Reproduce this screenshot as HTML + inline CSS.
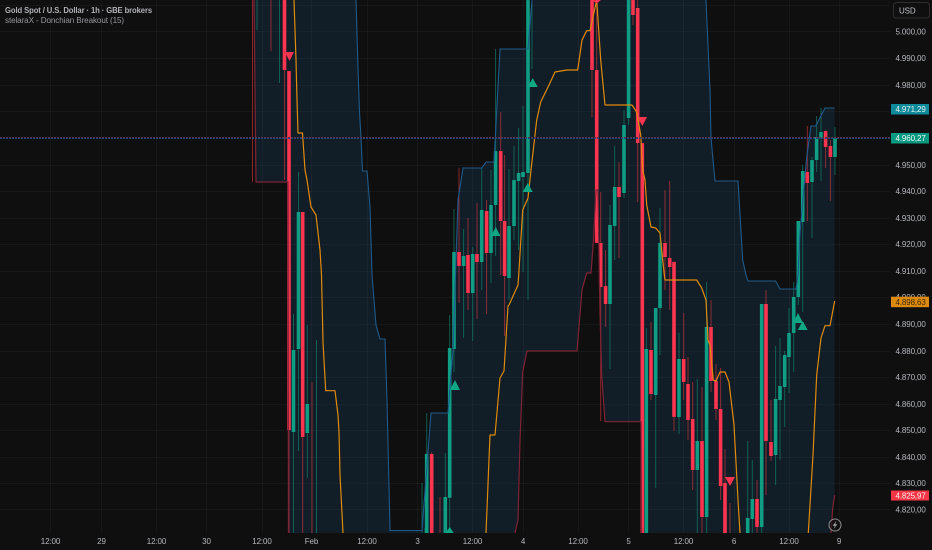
<!DOCTYPE html>
<html lang="en">
<head>
<meta charset="utf-8">
<title>Gold Spot / U.S. Dollar</title>
<style>
html,body{margin:0;padding:0;background:#0f0f0f;width:932px;height:550px;overflow:hidden}
svg{display:block;position:absolute;left:0;top:0;filter:blur(.3px)}
text{font-family:"Liberation Sans",sans-serif;letter-spacing:-.12px}
</style>
</head>
<body>
<svg width="932" height="550" viewBox="0 0 932 550" xmlns="http://www.w3.org/2000/svg">
<defs><clipPath id="c"><rect x="0" y="0" width="890" height="533"/></clipPath></defs>
<rect width="932" height="550" fill="#0f0f0f"/>
<g clip-path="url(#c)">
<polygon fill="#111d27" points="254,-5 356,-5 356,0 358,68 359.5,112 361,138 362.5,171 367,171 370,207 372,275 376,325 380,339 385,339 387,400 390,530.5 422,530.5 431,413 448,413 453,350 458,200 463,168 481.7,168 486,162 494,162 500,49 528,49 532,-5 705.5,-5 706,0 710,90 711,138 715,181 738,181 742.7,260 746,275 748,281 775.6,281 780,289 796,289 798,275 800,233 806.7,157 811,126 815.7,126 825,108 834.7,108 834.7,495 832.7,508 831,533 830,540 642,540 641,421.7 605,421.7 601.7,375 600,312 598,190 596,190 593.3,243 591,273 586.7,273 582,290 577,351 527,351 522.7,371.7 520,441 518,520 515,533 514,540 288,540 288,182 256,182 254,0"/>
<!-- grid -->
<g stroke="#fff" stroke-opacity=".035" stroke-width="1" fill="none">
<path d="M0 5.5H890M0 31.5H890M0 58.5H890M0 85.5H890M0 111.5H890M0 165.5H890M0 191.5H890M0 218.5H890M0 244.5H890M0 271.5H890M0 297.5H890M0 324.5H890M0 351.5H890M0 377.5H890M0 404.5H890M0 430.5H890M0 457.5H890M0 483.5H890M0 509.5H890"/>
<path d="M50.5 0V533M101.5 0V533M156.5 0V533M206.5 0V533M262.5 0V533M311.5 0V533M367.5 0V533M417.5 0V533M472.5 0V533M523.5 0V533M578.5 0V533M628.5 0V533M683.5 0V533M734.5 0V533M789.5 0V533M839.5 0V533"/>
</g>
<!-- wicks -->
<path fill="none" stroke="#0f8a75" stroke-opacity=".62" stroke-width="1" d="M257 0V30M279.5 0V83M293.5 314V533M298.5 172V451M307.3 325V478M316.5 340V533M422 483V533M425 528V533M426.7 413V533M445.3 453V533M449.7 315V533M454 209V372M463.6 229V338M472.7 247V341M481.7 168V290M491 170V283M495.6 49V256M509 169V300M514 146V240M518.6 128V250M523 106V272M528 0V300M532 0V69M610 205V369M614.7 146V260M624 110V198M628.6 0V125M646.3 328V533M655.7 308V488M660 208V355M679 333V434M697.3 379V533M706.6 282V533M747.7 441V533M752.3 460V533M761.7 304V533M775.6 346V485M780 338V460M784.7 351V427M789 308V393M793.7 282V372M798.3 221V305M802.7 165V312M812 157V238M816.6 116V172M821 108V181M835 127V175"/>
<path fill="none" stroke="#f23645" stroke-opacity=".55" stroke-width="1" d="M252.5 0V182M271 0V51M284.5 0V180M289 71V533M302.7 212V533M312 382V533M431.7 452V533M440 497V533M459 168V303M468 218V310M477 203V319M486.6 200V314M500.7 112V275M504.6 155V336M592 0V117M596.7 0V243M600.7 192V421M605.6 250V327M619 162V258M633 0V25M637.7 0V202M651 322V400M665 190V290M669.7 181V310M674 261V431M683.7 313V400M688 357V440M692.7 382V490M702 387V533M711 300V392M716 364V420M720.6 368V500M725 449V533M730 503V533M757 480V533M766 290V495M771 400V461M807.3 126V221M825.6 130V168M830.4 140V201"/>
<!-- bodies -->
<path fill="none" stroke="#0f9d84" stroke-width="3.6" d="M293.5 350V432M298.5 212V349M307.3 404V433M426.7 454V533M445.3 497V533M449.7 348V497.7M454 252V349M463.6 256V266M472.7 254V293M481.7 210V262M491 205V253M495.6 151V205M509 226V278M514 180V226M518.6 173V181M523 172V177M528 0V173M610 225V304M614.7 187V226M624 125V193M628.6 0V118M646.3 349V533M655.7 308V395M660 243V308M679 359V417M697.3 441V470M706.6 327V517M747.7 518V533M752.3 499V519M761.7 304V527M775.6 399V455M780 386V400M784.7 355V387M789 333V357M793.7 297V333M798.3 221V297M802.7 171V222M812 160V182M816.6 137V160M821 132V138M835 138V157"/>
<path fill="none" stroke="#fb3450" stroke-width="3.6" d="M284.5 0V70M289 71V430M302.7 212V437M431.7 454V533M459 252V266M468 255V293M477 254V262M486.6 211V253M500.7 151V221M504.6 221V276M592 0V70M596.7 70V243M600.7 243V287M605.6 286V304M619 187V197M633 0V15M637.7 8V143M642.3 143V533M651 350V394M665 243V257M669.7 258V267M674 262V417M683.7 359V382M688 384V420M692.7 419V470M702 441V517M711 327V381M716 381V409M720.6 409V486M725 483V533M757 499V527M766 304V441M771 442V456M807.3 172V183M825.6 131V147M830.4 146V157"/>
<!-- band lines -->
<path fill="none" stroke="#1f5a8a" stroke-width="1.1" d="M356 0L358 68L359.5 112L361 138L362.5 171L367 171L370 207L372 275L376 325L380 339L385 339L387 400L390 530.5L422 530.5L431 413L448 413L453 350L458 200L463 168L481.7 168L486 162L494 162L500 49L528 49L532 0M706 0L710 90L711 138L715 181L738 181L742.7 260L746 275L748 281L775.6 281L780 289L796 289L798 275L800 233L806.7 157L811 126L815.7 126L825 108L834.7 108"/>
<path fill="none" stroke="#7f2336" stroke-width="1.2" d="M254 0L256 182L288 182L288.5 540M515 533L518 520L520 441L522.7 371.7L527 351L577 351L582 290L586.7 273L591 273L593.3 243L596 190L598 190L600 312L601.7 375L605 421.7L641 421.7L641.5 540M831 533L832.7 508L834.7 495"/>
<path fill="none" stroke="#e08a0c" stroke-width="1.2" stroke-linejoin="round" d="M294 0L296 60L297 100L298 133L302.5 133L305 170L307 180L311 207L316 215L320 250L321.5 275L323 342L325.7 390.7L335 390.7L338 415L339 432L340 475L343 533M486 533L490 435L495 435L500 378L504 371L508 306L509 305L518 285L518.7 275L522.7 210L528 198L531 170L536.7 120L540.7 102L549 85L555 72L567 70L577.7 70L582 40L586.7 30.7L590 30.7L596.7 0L600.7 60L605 105L632 105L636.7 112L640.7 135L642.7 170L645 180L646.7 205L651 227L655.7 228L660 233L661.7 250L664.3 275L665 280L696.7 280L701.7 288L706 300L708 340L710 345L713.3 380L716 381L720 372L725 372L729 382L734 425L738 500L740 533M808.3 533L813 455L816.7 375L821 338L825 325.7L830 325.7L834.7 301"/>
<!-- markers -->
<g fill="#10a785">
<polygon points="449.7,527 445,534 454.4,534"/>
<polygon points="455,380 450,390 460,390"/>
<polygon points="495.7,227 491,236 500.4,236"/>
<polygon points="527.7,183 522.7,192 532.7,192"/>
<polygon points="532.7,78 527.7,87 537.7,87"/>
<polygon points="798,313 793,323 803,323"/>
<polygon points="802.7,321 797.7,330 807.7,330"/>
</g>
<g fill="#fb3450">
<polygon points="285,52 294,52 289.5,61"/>
<polygon points="592,0 601,0 596.7,3.5"/>
<polygon points="637.5,117 647,117 642.3,126"/>
<polygon points="725,477 735,477 730,486"/>
</g>
<!-- crosshair -->
<path d="M0 137.5H891" stroke="#5a3350" stroke-width="1" stroke-dasharray="2 1" fill="none"/>
<path d="M0 138.5H891" stroke="#23457a" stroke-width="1" stroke-dasharray="2 1" fill="none"/>
</g>

<!-- legend -->
<text x="5" y="13" font-size="8.6" font-weight="700" fill="#b0b1b5" textLength="147" lengthAdjust="spacingAndGlyphs">Gold Spot / U.S. Dollar · 1h · GBE brokers</text>
<text x="5" y="23" font-size="8.6" fill="#96979c" textLength="119" lengthAdjust="spacingAndGlyphs">stelaraX - Donchian Breakout (15)</text>

<!-- USD -->
<rect x="893.5" y="2.5" width="36" height="15.5" rx="3" fill="#0f0f0f" stroke="#2e2e2e"/>
<text x="899" y="13.5" font-size="8" fill="#c2c4ca">USD</text>

<!-- price scale -->
<g font-size="8" fill="#b6b8bd" text-anchor="end">
<text x="925.7" y="34.5">5.000,00</text>
<text x="925.7" y="61">4.990,00</text>
<text x="925.7" y="88">4.980,00</text>
<text x="925.7" y="168">4.950,00</text>
<text x="925.7" y="194">4.940,00</text>
<text x="925.7" y="221">4.930,00</text>
<text x="925.7" y="247">4.920,00</text>
<text x="925.7" y="274">4.910,00</text>
<text x="925.7" y="300">4.900,00</text>
<text x="925.7" y="327">4.890,00</text>
<text x="925.7" y="354">4.880,00</text>
<text x="925.7" y="380">4.870,00</text>
<text x="925.7" y="407">4.860,00</text>
<text x="925.7" y="433">4.850,00</text>
<text x="925.7" y="460">4.840,00</text>
<text x="925.7" y="486">4.830,00</text>
<text x="925.7" y="512.5">4.820,00</text>
</g>
<rect x="891" y="104" width="38" height="10.5" fill="#0f8a9a"/>
<text x="925.7" y="112.2" font-size="8" fill="#e4f2f0" text-anchor="end">4.971,29</text>
<rect x="891" y="133" width="38" height="10.5" fill="#089981"/>
<text x="925.7" y="141.2" font-size="8" fill="#eef8f6" text-anchor="end">4.960,27</text>
<rect x="891" y="296.7" width="38" height="10.5" fill="#dd8a0f"/>
<text x="925.7" y="305" font-size="8" fill="#3a2a08" text-anchor="end">4.898,63</text>
<rect x="891" y="490.5" width="38" height="10" fill="#f23645"/>
<text x="925.7" y="498.6" font-size="8" fill="#ffeef0" text-anchor="end">4.825,97</text>

<!-- time axis -->
<g font-size="8" fill="#b6b8bd" text-anchor="middle">
<text x="50.5" y="544">12:00</text>
<text x="101.5" y="544">29</text>
<text x="156.5" y="544">12:00</text>
<text x="206.5" y="544">30</text>
<text x="262" y="544">12:00</text>
<text x="311.5" y="544">Feb</text>
<text x="367" y="544">12:00</text>
<text x="417.5" y="544">3</text>
<text x="472.5" y="544">12:00</text>
<text x="523" y="544">4</text>
<text x="578" y="544">12:00</text>
<text x="628.5" y="544">5</text>
<text x="683.5" y="544">12:00</text>
<text x="734" y="544">6</text>
<text x="789" y="544">12:00</text>
<text x="839" y="544">9</text>
</g>

<!-- lightning -->
<circle cx="835" cy="525" r="6" fill="#0f0f0f" fill-opacity=".6" stroke="#8d8d90" stroke-width="1"/>
<path d="M836.4 520.8L832.6 525.8H834.8L833.6 529.2L837.4 524.2H835.2Z" fill="#9a9a9d"/>
</svg>
</body>
</html>
